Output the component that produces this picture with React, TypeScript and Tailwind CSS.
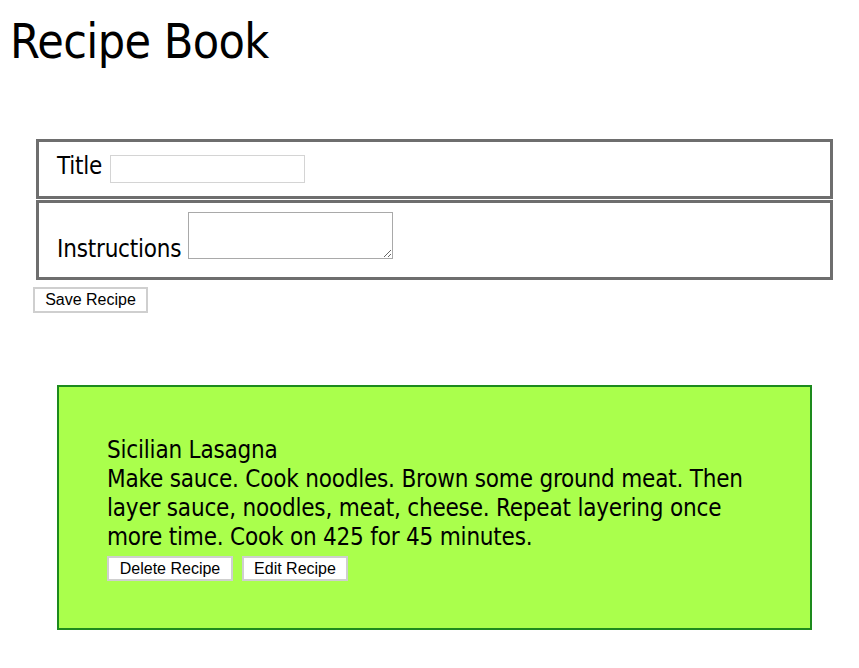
export default function App() {
  const font = { fontFamily: '"DejaVu Sans Condensed", "DejaVu Sans", sans-serif' };
  const btnFont = { fontFamily: '"Liberation Sans", Arial, sans-serif' };
  return (
    <div className="min-h-screen bg-white text-black tracking-[-0.2px]" style={font}>
      <h1 className="pl-[10px] pt-[12px] text-[48px] leading-[58px] font-normal tracking-[-0.6px]">Recipe Book</h1>

      <form className="mt-[69px] ml-[33px]" onSubmit={(e) => e.preventDefault()}>
        <div className="ml-[3px] w-[797px] flex flex-col gap-[1px]">
          <div className="h-[60px] border-[3px] border-[#6e6e6e] flex items-center pl-[18px]">
            <label className="text-[24px] leading-[29px] mb-[6px] mr-[8px]">Title</label>
            <input type="text" className="w-[195px] h-[28px] border border-[#d4d4d4] bg-white" />
          </div>
          <div className="h-[80px] border-[3px] border-[#6e6e6e] flex items-end pl-[18px] pb-[13px]">
            <label className="text-[24px] leading-[29px] mr-[7px]">Instructions</label>
            <textarea className="w-[205px] h-[47px] mb-[5px] border border-[#a9a9a9] bg-white" />
          </div>
        </div>
        <button
          type="submit"
          className="mt-[7px] w-[115px] h-[26px] border-2 border-[#cfcfcf] bg-white text-[16px] leading-none text-black tracking-normal"
          style={btnFont}
        >
          Save Recipe
        </button>
      </form>

      <div className="mt-[72px] ml-[57px] w-[755px] border-2 border-[#1d8a1d] bg-[#aaff4c] px-12 pt-[49px] pb-[47px]">
        <div className="text-[24px] leading-[29px]">Sicilian Lasagna</div>
        <div className="text-[24px] leading-[29px]">
          Make sauce. Cook noodles. Brown some ground meat. Then layer sauce, noodles, meat, cheese. Repeat layering once more time. Cook on 425 for 45 minutes.
        </div>
        <div className="mt-[4px] flex gap-[9px] tracking-normal" style={btnFont}>
          <button className="w-[126px] h-[25px] border-2 border-[#cfcfcf] bg-white text-[16px] leading-none">Delete Recipe</button>
          <button className="w-[106px] h-[25px] border-2 border-[#cfcfcf] bg-white text-[16px] leading-none">Edit Recipe</button>
        </div>
      </div>
    </div>
  );
}
